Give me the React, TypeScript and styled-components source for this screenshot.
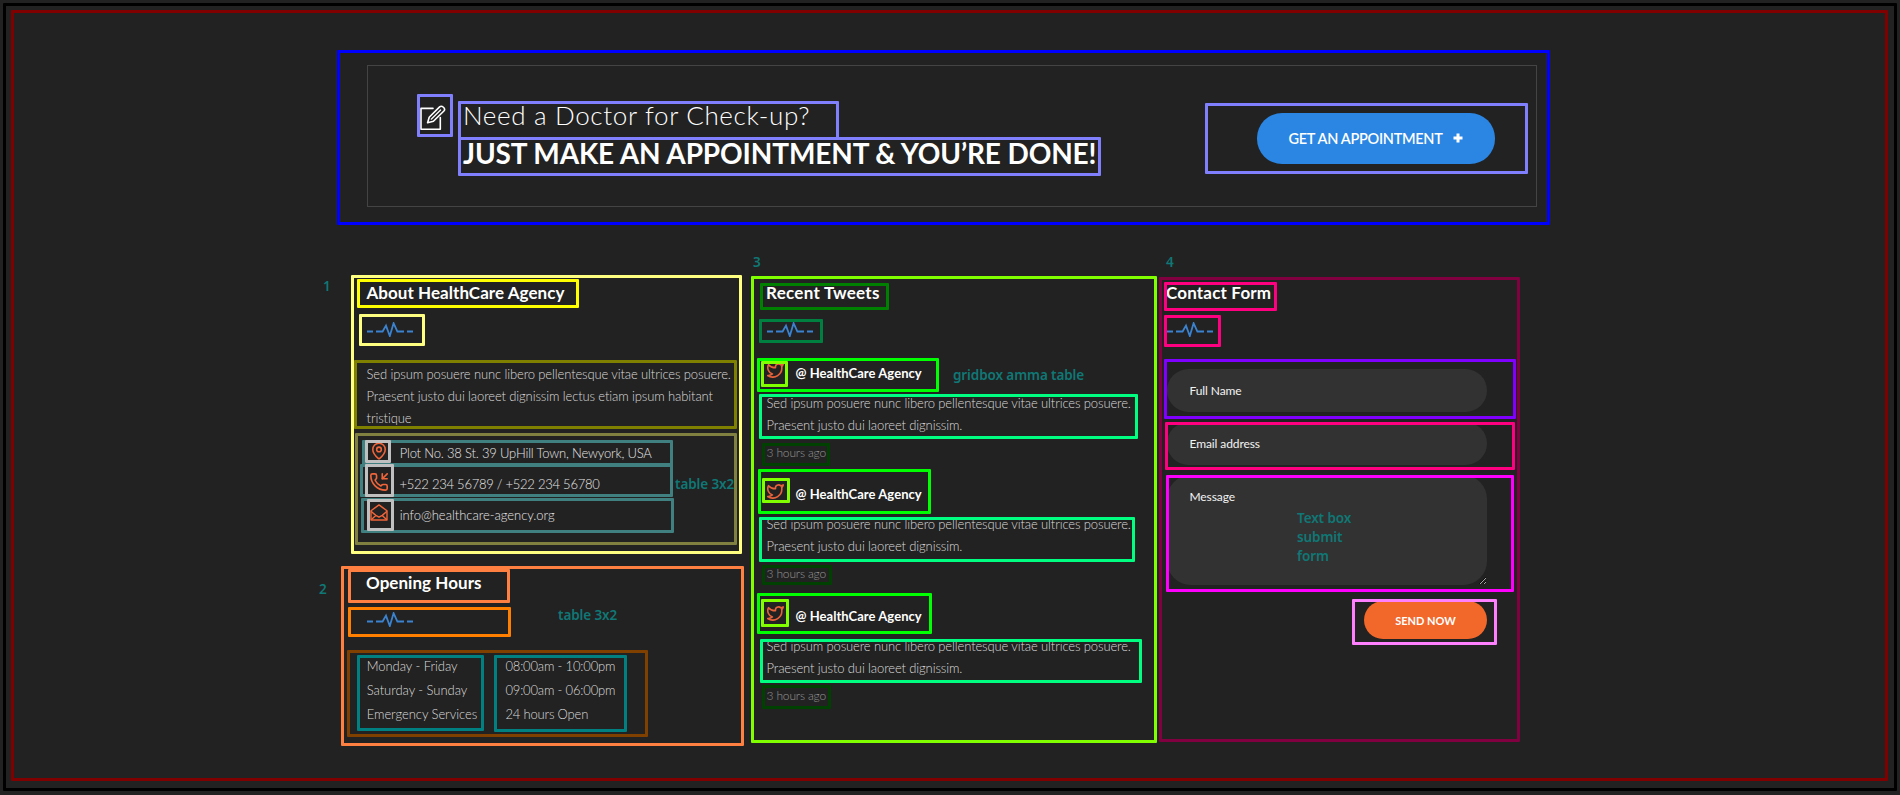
import React from 'react';
import styled, { createGlobalStyle, css } from 'styled-components';
import { MapPin, PhoneIncoming } from 'lucide-react';

const GlobalStyle = createGlobalStyle`
  *, *::before, *::after { box-sizing: border-box; }
  body { margin: 0; background: #222; font-family: Lato, 'Liberation Sans', sans-serif; }
  p, h1, h2, h3 { margin: 0; }
`;

/* A box whose coloured outline is painted over whatever it holds. */
const outline = (color: string, thickness = 3) => css`
  position: relative;
  flex: none;
  &::after {
    content: '';
    position: absolute;
    inset: 0;
    border: ${thickness}px solid ${color};
    border-radius: ${thickness > 1 ? 1 : 0}px;
    pointer-events: none;
  }
`;

interface BoxProps {
  $w: number;
  $h: number;
  $c: string;
  $top?: number;
  $left?: number;
}

const boxed = css<BoxProps>`
  ${({ $c }) => outline($c)}
  display: flex;
  width: ${({ $w }) => $w}px;
  height: ${({ $h }) => $h}px;
  margin: ${({ $top = 0 }) => $top}px 0 0 ${({ $left = 0 }) => $left}px;
`;

const Page = styled.div`
  width: 1900px;
  height: 795px;
  padding: 3px;
  overflow: hidden;
  background: #222;
`;
const OuterFrame = styled.div`
  ${outline('#000')}
  width: 1894px;
  height: 788px;
  padding: 7px 9px 10px 8px;
`;
const InnerFrame = styled.div`
  ${outline('#800000')}
  height: 771px;
  padding-top: 40px;
`;

/* ---- banner ---- */
const Banner = styled.section`
  ${outline('#0000ff')}
  width: 1213px;
  height: 175px;
  margin-left: 326px;
  padding: 15px 13px 18px 30px;
`;
const BannerInner = styled.div`
  ${outline('#444', 1)}
  display: flex;
  height: 142px;
  padding: 0 9px 0 50px;
`;
const NoteIconBox = styled.div`
  ${boxed}
  padding: 11px 0 0 3px;
`;
const Titles = styled.div`
  margin: 36px 0 0 5px;
`;
const TitleBox = styled.div`
  ${boxed}
  flex-direction: column;
`;
const LightTitle = styled.h2`
  margin: -1px 0 0 5px;
  font-size: 26px;
  font-weight: 300;
  line-height: 30px;
  letter-spacing: 0.66px;
  color: #fff;
  white-space: nowrap;
`;
const BoldTitle = styled.h1`
  margin: -1px 0 0 5px;
  font-size: 28px;
  font-weight: 700;
  line-height: 34px;
  letter-spacing: -0.12px;
  color: #fff;
  white-space: nowrap;
`;
const ActionBox = styled.div`
  ${boxed}
  margin-left: auto;
  padding: 10px 0 0 52px;
`;
const AppointmentButton = styled.button`
  display: flex;
  align-items: center;
  gap: 10px;
  width: 238px;
  height: 51px;
  padding: 0 0 1px 31.5px;
  border: 0;
  border-radius: 25px;
  background: #2a86e2;
  color: #fff;
  font: 600 14.5px Lato, sans-serif;
  letter-spacing: -0.3px;
  white-space: nowrap;
`;

/* ---- columns ---- */
const Columns = styled.div`
  display: flex;
  align-items: flex-start;
  margin: 50px 0 0 330px;
`;
const LeftColumn = styled.div`
  width: 403px;
`;
const Panel = styled.section`
  ${boxed}
  flex-direction: column;
`;
const HeadingBox = styled.div<BoxProps & { $x: number; $y: number }>`
  ${boxed}
  h3 { margin: ${({ $y }) => $y}px 0 0 ${({ $x }) => $x}px; }
`;
const Heading = styled.h3<{ $spacing?: number }>`
  font-size: 17px;
  font-weight: 700;
  line-height: 22px;
  letter-spacing: ${({ $spacing = 0.05 }) => $spacing}px;
  color: #fff;
  white-space: nowrap;
`;
const PulseBox = styled.div<BoxProps & { $x: number; $y: number }>`
  ${boxed}
  padding: ${({ $y }) => $y}px 0 0 ${({ $x }) => $x}px;
`;
const CopyBox = styled.div<BoxProps & { $x: number; $y: number }>`
  ${boxed}
  p { margin: ${({ $y }) => $y}px 0 0 ${({ $x }) => $x}px; }
`;
const Copy = styled.p`
  font-size: 13px;
  font-weight: 300;
  line-height: 22px;
  letter-spacing: -0.12px;
  color: #dadada;
  white-space: nowrap;
`;

const DetailsBox = styled.div`
  ${boxed}
  flex-direction: column;
`;
const DetailRow = styled.div`
  ${boxed}
`;
const DetailIcon = styled.div<BoxProps & { $x: number; $y: number }>`
  ${boxed}
  z-index: 1;
  padding: ${({ $y }) => $y}px 0 0 ${({ $x }) => $x}px;
  color: #f0653a;
`;
const DetailText = styled.p<{ $top: number; $gap: number; $spacing: number }>`
  margin: ${({ $top }) => $top}px 0 0 ${({ $gap }) => $gap}px;
  font-size: 13px;
  font-weight: 300;
  line-height: 20px;
  letter-spacing: ${({ $spacing }) => $spacing}px;
  color: #e6e6e6;
  white-space: nowrap;
`;

const HoursTable = styled.div`
  ${boxed}
  padding: 5px 0 0 10px;
  gap: 10px;
`;
const HoursColumn = styled.div<BoxProps & { $x: number; $spacing: number }>`
  ${boxed}
  flex-direction: column;
  p {
    margin-left: ${({ $x }) => $x}px;
    letter-spacing: ${({ $spacing }) => $spacing}px;
  }
  p:first-child { margin-top: -1px; }
`;
const HoursCell = styled.p`
  font-size: 13px;
  font-weight: 300;
  line-height: 24px;
  color: #dadada;
  white-space: nowrap;
`;

/* ---- tweets ---- */
const HandleBox = styled.div`
  ${boxed}
`;
const BirdBox = styled.div<BoxProps & { $x: number; $y: number }>`
  ${boxed}
  padding: ${({ $y }) => $y}px 0 0 ${({ $x }) => $x}px;
`;
const Handle = styled.p<{ $top: number; $gap: number }>`
  margin: ${({ $top }) => $top}px 0 0 ${({ $gap }) => $gap}px;
  font-size: 13px;
  font-weight: 700;
  line-height: 20px;
  letter-spacing: 0.04px;
  color: #fff;
  white-space: nowrap;
`;
const TimeBox = styled.div<BoxProps & { $y: number }>`
  ${boxed}
  p { margin: ${({ $y }) => $y}px 0 0 4.5px; }
`;
const Time = styled.p`
  font-size: 12px;
  font-weight: 300;
  line-height: 16px;
  letter-spacing: -0.15px;
  color: #969696;
  white-space: nowrap;
`;

/* ---- form ---- */
const FieldBox = styled.div<BoxProps & { $x: number; $y: number }>`
  ${boxed}
  padding: ${({ $y }) => $y}px 0 0 ${({ $x }) => $x}px;
`;
const field = css`
  width: 320px;
  border: 0;
  outline: 0;
  background: #323232;
  color: #fff;
  font: 400 12px Lato, sans-serif;
  letter-spacing: -0.1px;
  &::placeholder { color: #f2f2f2; opacity: 1; }
`;
const Input = styled.input`
  ${field}
  height: 43px;
  padding: 0 22.5px;
  border-radius: 22px;
`;
const TextArea = styled.textarea`
  ${field}
  height: 110px;
  padding: 14px 22.5px;
  border-radius: 24px;
  line-height: 16px;
`;
const SendBox = styled.div`
  ${boxed}
  padding: 2px 0 0 12px;
`;
const SendButton = styled.button`
  width: 123px;
  height: 38px;
  padding: 0;
  border: 0;
  border-radius: 19px;
  background: #f2672a;
  color: #fff;
  font: 700 11px Lato, sans-serif;
`;

/* Teal remarks laid over the panels. */
const Note = styled.span<{ $x: number; $y: number }>`
  position: absolute;
  left: ${({ $x }) => $x}px;
  top: ${({ $y }) => $y}px;
  z-index: 1;
  font: 600 13.5px/19px 'Noto Sans', sans-serif;
  letter-spacing: -0.1px;
  color: #0f7876;
  white-space: pre;
`;

const NoteIcon = () => (
  <svg width="26" height="26" viewBox="0 0 26 26" fill="none" stroke="#fff" strokeWidth="1.6" strokeLinejoin="round" strokeLinecap="round">
    <path d="M13 3.4H1V24.2H20.3V12.6" />
    <path d="M7.6 17.8 9.2 12.2 19.6 1.9C21.8-.1 26.1 3.5 23.9 6L13.4 16.3Z" />
    <path d="M11.2 14.2 20.6 5" strokeWidth="1.2" />
  </svg>
);

const PlusIcon = () => (
  <svg width="10" height="10" viewBox="0 0 10 10" fill="#fff">
    <path d="M3.5 0.5h3v3h3v3h-3v3h-3v-3h-3v-3h3z" />
  </svg>
);

const Pulse = () => (
  <svg width="48" height="15" viewBox="0 0 48 15" fill="none" stroke="#3b82cf" strokeWidth="1.8">
    <path d="M0 9.5H6M9 9.5H15.6L19 3.6 22.8 14 26.6 1.2 30.4 9.5H37M40 9.5H46" />
  </svg>
);

const Bird = () => (
  <svg width="17" height="15" viewBox="1 3 22 19" fill="none" stroke="#e8623a" strokeWidth="2.1" strokeLinejoin="round" strokeLinecap="round">
    <path d="M22 4s-.7 2.1-2 3.4c1.6 10-9.4 17.3-18 11.6 2.2.1 4.4-.6 6-2C3 15.5.5 9.6 3 5c2.2 2.6 5.6 4.1 9 4-.9-4.2 4-6.6 7-3.8 1.1 0 3-1.2 3-1.2z" />
  </svg>
);

const OpenMail = () => (
  <svg width="18" height="17" viewBox="0 0 18 17" fill="none" stroke="currentColor" strokeWidth="1.4" strokeLinejoin="round">
    <path d="M1 6.8 9 .9l8 5.9V16H1Z" />
    <path d="M1 7.2 5.8 11.4M17 7.2 12.2 11.4M1.2 15.8 5.8 11.4 9 13.2 12.2 11.4 16.8 15.8" />
  </svg>
);

const tweets = [
  { handle: { w: 182, h: 34, top: 15, left: 6 }, bird: { w: 27, h: 26, top: 3, x: 6, y: 2 }, text: { top: 5, gap: 7.5 },
    body: { w: 379, h: 45, top: 2, left: 8, x: 7.6, y: -2 }, time: { w: 68, h: 23, top: 4, y: 2 } },
  { handle: { w: 173, h: 45, top: 3, left: 7 }, bird: { w: 28, h: 25, top: 9, x: 5, y: 6 }, text: { top: 15, gap: 5.5 },
    body: { w: 376, h: 45, top: 3, left: 8, x: 7.6, y: -4 }, time: { w: 70, h: 20, top: 3, y: 1 } },
  { handle: { w: 175, h: 41, top: 8, left: 6 }, bird: { w: 28, h: 28, top: 6, x: 6, y: 7 }, text: { top: 13, gap: 6.5 },
    body: { w: 382, h: 44, top: 5, left: 9, x: 6.6, y: -4 }, time: { w: 69, h: 24, top: 2, y: 3 } },
];

export default function App() {
  return (
    <Page>
      <GlobalStyle />
      <OuterFrame>
        <InnerFrame>
          <Banner>
            <BannerInner>
              <NoteIconBox $w={36} $h={43} $c="#8080ff" $top={29}>
                <NoteIcon />
              </NoteIconBox>
              <Titles>
                <TitleBox $w={381} $h={39} $c="#8080ff">
                  <LightTitle>Need a Doctor for Check-up?</LightTitle>
                </TitleBox>
                <TitleBox $w={643} $h={39} $c="#8080ff" $top={-3}>
                  <BoldTitle>JUST MAKE AN APPOINTMENT &amp; YOU’RE DONE!</BoldTitle>
                </TitleBox>
              </Titles>
              <ActionBox $w={323} $h={71} $c="#8080ff" $top={38}>
                <AppointmentButton>
                  GET AN APPOINTMENT
                  <PlusIcon />
                </AppointmentButton>
              </ActionBox>
            </BannerInner>
          </Banner>

          <Columns>
            <LeftColumn>
              <Panel $w={391} $h={279} $c="#ffff80" $left={10}>
                <Note $x={-28} $y={2}>1</Note>
                <HeadingBox $w={222} $h={29} $c="#ffff00" $top={4} $left={6} $x={9.5} $y={3}>
                  <Heading>About HealthCare Agency</Heading>
                </HeadingBox>
                <PulseBox $w={66} $h={32} $c="#ffff80" $top={6} $left={8} $x={8} $y={8}>
                  <Pulse />
                </PulseBox>
                <CopyBox $w={383} $h={69} $c="#808000" $top={14} $left={3} $x={12.6} $y={3}>
                  <Copy>
                    Sed ipsum posuere nunc libero pellentesque vitae ultrices posuere.
                    <br />
                    Praesent justo dui laoreet dignissim lectus etiam ipsum habitant
                    <br />
                    tristique
                  </Copy>
                </CopyBox>
                <DetailsBox $w={382} $h={112} $c="#808040" $top={4} $left={4}>
                  <DetailRow $w={311} $h={26} $c="#408080" $top={7} $left={7}>
                    <DetailIcon $w={26} $h={23} $c="#c0c0c0" $left={3} $x={7} $y={2}>
                      <MapPin width={14} height={18} viewBox="3 1 18 22" strokeWidth={2} />
                    </DetailIcon>
                    <DetailText $top={3} $gap={8.7} $spacing={-0.18}>Plot No. 38 St. 39 UpHill Town, Newyork, USA</DetailText>
                  </DetailRow>
                  <DetailRow $w={313} $h={33} $c="#408080" $top={-2} $left={5}>
                    <DetailIcon $w={29} $h={33} $c="#c0c0c0" $left={5} $x={5} $y={9}>
                      <PhoneIncoming width={18} height={18} viewBox="1 1 22 22" strokeWidth={2} />
                    </DetailIcon>
                    <DetailText $top={10} $gap={5.5} $spacing={-0.25}>+522 234 56789 / +522 234 56780</DetailText>
                  </DetailRow>
                  <DetailRow $w={313} $h={35} $c="#408080" $top={1} $left={6}>
                    <DetailIcon $w={27} $h={32} $c="#c0c0c0" $top={1} $left={6} $x={3} $y={5}>
                      <OpenMail />
                    </DetailIcon>
                    <DetailText $top={7} $gap={5.7} $spacing={-0.02}>info@healthcare-agency.org</DetailText>
                  </DetailRow>
                  <Note $x={320} $y={42}>table 3x2</Note>
                </DetailsBox>
              </Panel>

              <Panel $w={403} $h={180} $c="#ff8040" $top={12}>
                <Note $x={-22} $y={14}>2</Note>
                <Note $x={217} $y={40}>table 3x2</Note>
                <HeadingBox $w={162} $h={34} $c="#ff8040" $top={3} $left={7} $x={18} $y={3}>
                  <Heading>Opening Hours</Heading>
                </HeadingBox>
                <PulseBox $w={163} $h={30} $c="#ff8000" $top={4} $left={7} $x={19} $y={5}>
                  <Pulse />
                </PulseBox>
                <HoursTable $w={301} $h={87} $c="#804000" $top={13} $left={6}>
                  <HoursColumn $w={127} $h={76} $c="#008080" $x={9.7} $spacing={-0.04}>
                    <HoursCell>Monday - Friday</HoursCell>
                    <HoursCell>Saturday - Sunday</HoursCell>
                    <HoursCell>Emergency Services</HoursCell>
                  </HoursColumn>
                  <HoursColumn $w={133} $h={77} $c="#008080" $x={11.4} $spacing={-0.17}>
                    <HoursCell>08:00am - 10:00pm</HoursCell>
                    <HoursCell>09:00am - 06:00pm</HoursCell>
                    <HoursCell>24 hours Open</HoursCell>
                  </HoursColumn>
                </HoursTable>
              </Panel>
            </LeftColumn>

            <Panel $w={406} $h={467} $c="#80ff00" $top={1} $left={7}>
              <Note $x={2} $y={-23}>3</Note>
              <Note $x={202} $y={90}>gridbox amma table</Note>
              <HeadingBox $w={129} $h={27} $c="#008000" $top={7} $left={9} $x={6} $y={-1}>
                <Heading $spacing={0.28}>Recent Tweets</Heading>
              </HeadingBox>
              <PulseBox $w={64} $h={24} $c="#008040" $top={9} $left={8} $x={8} $y={3}>
                <Pulse />
              </PulseBox>
              {tweets.map((t, i) => (
                <React.Fragment key={i}>
                  <HandleBox $w={t.handle.w} $h={t.handle.h} $c="#00ff00" $top={t.handle.top} $left={t.handle.left}>
                    <BirdBox $w={t.bird.w} $h={t.bird.h} $c="#80ff00" $top={t.bird.top} $left={4} $x={t.bird.x} $y={t.bird.y}>
                      <Bird />
                    </BirdBox>
                    <Handle $top={t.text.top} $gap={t.text.gap}>@ HealthCare Agency</Handle>
                  </HandleBox>
                  <CopyBox $w={t.body.w} $h={t.body.h} $c="#00ff80" $top={t.body.top} $left={t.body.left} $x={t.body.x} $y={t.body.y}>
                    <Copy>
                      Sed ipsum posuere nunc libero pellentesque vitae ultrices posuere.
                      <br />
                      Praesent justo dui laoreet dignissim.
                    </Copy>
                  </CopyBox>
                  <TimeBox $w={t.time.w} $h={t.time.h} $c="#004000" $top={t.time.top} $left={11} $y={t.time.y}>
                    <Time>3 hours ago</Time>
                  </TimeBox>
                </React.Fragment>
              ))}
            </Panel>

            <Panel $w={361} $h={465} $c="#800040" $top={2} $left={2}>
              <Note $x={7} $y={-24}>4</Note>
              <HeadingBox $w={113} $h={29} $c="#ff0080" $top={5} $left={5} $x={2} $y={0}>
                <Heading $spacing={0.18}>Contact Form</Heading>
              </HeadingBox>
              <PulseBox $w={57} $h={32} $c="#ff0080" $top={4} $left={5} $x={3} $y={7}>
                <Pulse />
              </PulseBox>
              <FieldBox $w={352} $h={60} $c="#8000ff" $top={12} $left={5} $x={3} $y={10}>
                <Input placeholder="Full Name" />
              </FieldBox>
              <FieldBox $w={350} $h={48} $c="#ff0080" $top={3} $left={6} $x={2} $y={0}>
                <Input placeholder="Email address" />
              </FieldBox>
              <FieldBox $w={348} $h={117} $c="#ff00ff" $top={5} $left={7} $x={1} $y={0}>
                <TextArea placeholder="Message" />
                <Note $x={131} $y={34}>{'Text box\nsubmit\nform'}</Note>
              </FieldBox>
              <SendBox $w={145} $h={46} $c="#ff80ff" $top={7} $left={193}>
                <SendButton>SEND NOW</SendButton>
              </SendBox>
            </Panel>
          </Columns>
        </InnerFrame>
      </OuterFrame>
    </Page>
  );
}
